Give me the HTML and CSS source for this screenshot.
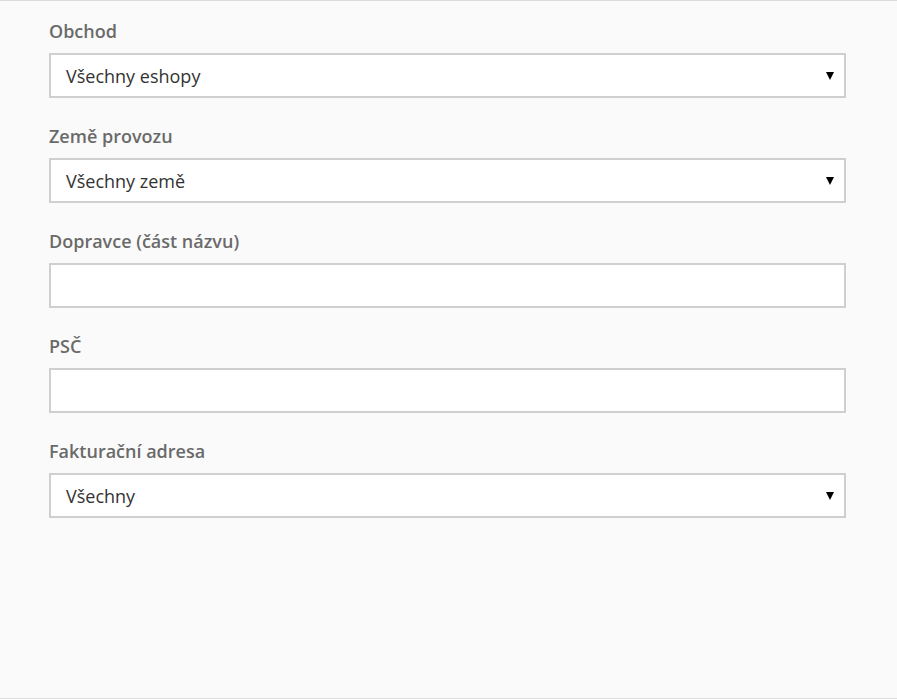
FILE: index.html
```html
<!DOCTYPE html>
<html lang="cs">
<head>
<meta charset="utf-8">
<title>Filtr</title>
<link rel="stylesheet" href="styles.css">
</head>
<body>
<div class="page">
  <form class="form">
    <div class="field">
      <label class="label">Obchod</label>
      <div class="select"><span class="value">Všechny eshopy</span><span class="arrow"></span></div>
    </div>
    <div class="field">
      <label class="label">Země provozu</label>
      <div class="select"><span class="value">Všechny země</span><span class="arrow"></span></div>
    </div>
    <div class="field">
      <label class="label">Dopravce (část názvu)</label>
      <div class="input"></div>
    </div>
    <div class="field">
      <label class="label">PSČ</label>
      <div class="input"></div>
    </div>
    <div class="field">
      <label class="label">Fakturační adresa</label>
      <div class="select"><span class="value">Všechny</span><span class="arrow"></span></div>
    </div>
  </form>
</div>
</body>
</html>
```
FILE: styles.css
```css
html, body {
  margin: 0;
  padding: 0;
}
body {
  background: #fafafa;
  font-family: "Open Sans", "Noto Sans", sans-serif;
}
.page {
  box-sizing: border-box;
  height: 699px;
  border-top: 1px solid #dcdcdc;
  border-bottom: 1px solid #dcdcdc;
  padding: 18px 0 0 49px;
}
.form {
  width: 797px;
  display: flex;
  flex-direction: column;
  gap: 26px;
}
.field {
  display: flex;
  flex-direction: column;
  gap: 10px;
}
.label {
  font-size: 18px;
  font-weight: 600;
  line-height: 24px;
  color: #6a6a6a;
}
.select, .input {
  box-sizing: border-box;
  height: 45px;
  background: #fff;
  border: 2px solid #cfcfcf;
  display: flex;
  align-items: center;
  justify-content: space-between;
  padding: 0 10px 0 15px;
}
.value {
  font-size: 18px;
  color: #333;
  line-height: 24px;
}
.arrow {
  width: 0;
  height: 0;
  border-left: 4.5px solid transparent;
  border-right: 4.5px solid transparent;
  border-top: 8px solid #000;
  margin-top: 1px;
}
```
